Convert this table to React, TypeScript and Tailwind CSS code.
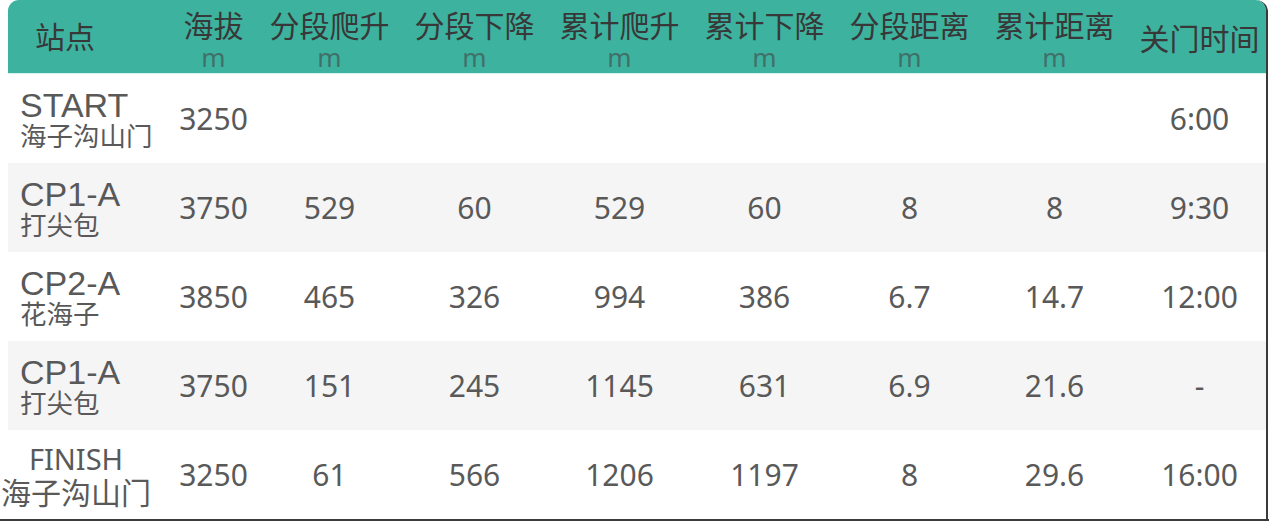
import React from "react"

interface Row {
    name: string
    sub: string
    big?: boolean
    cells: string[]
}

const headers: { label: string; unit?: string }[] = [
    { label: "海拔", unit: "m" },
    { label: "分段爬升", unit: "m" },
    { label: "分段下降", unit: "m" },
    { label: "累计爬升", unit: "m" },
    { label: "累计下降", unit: "m" },
    { label: "分段距离", unit: "m" },
    { label: "累计距离", unit: "m" },
    { label: "关门时间" },
]

const rows: Row[] = [
    { name: "START", sub: "海子沟山门", cells: ["3250", "", "", "", "", "", "", "6:00"] },
    { name: "CP1-A", sub: "打尖包", cells: ["3750", "529", "60", "529", "60", "8", "8", "9:30"] },
    { name: "CP2-A", sub: "花海子", cells: ["3850", "465", "326", "994", "386", "6.7", "14.7", "12:00"] },
    { name: "CP1-A", sub: "打尖包", cells: ["3750", "151", "245", "1145", "631", "6.9", "21.6", "-"] },
    { name: "FINISH", sub: "海子沟山门", big: true, cells: ["3250", "61", "566", "1206", "1197", "8", "29.6", "16:00"] },
]

const grid = "grid grid-cols-[162px_87px_repeat(6,145px)_1fr]"
const cjk = "font-['Noto_Sans','Noto_Sans_CJK_SC',sans-serif]"

export default function App() {
    return (
        <div className={`w-[1269px] h-[521px] bg-white border-b-2 border-[#3a3a3a] ${cjk}`}>
            <div className="ml-[8px] w-[1260px] h-[519px] border-r-2 border-[#3a3a3a] rounded-tr-[12px]">
                <div className={`${grid} h-[74px] bg-[#3db39f] rounded-t-[11px] border-b border-[#d6efea]`}>
                    <div className="flex items-center justify-center pr-[48px] text-[30px] text-[#383838]">站点</div>
                    {headers.map(h => (
                        <div key={h.label} className={`flex flex-col items-center justify-center ${h.unit ? "pt-[5px]" : "pl-[6px] pt-[4px]"}`}>
                            <span className="text-[30px] leading-[30px] text-[#383838] whitespace-nowrap">{h.label}</span>
                            {h.unit && <span className="mt-[5px] text-[26px] leading-[22px] text-[#41706a]">{h.unit}</span>}
                        </div>
                    ))}
                </div>
                {rows.map((r, i) => (
                    <div key={i} className={`${grid} h-[89px] ${i % 2 === 1 ? "bg-[#f5f5f5]" : "bg-white"} text-[#595959]`}>
                        {r.big ? (
                            <div className="ml-[-8px] w-[152px] flex flex-col items-center justify-center">
                                <span className="text-[29px] leading-[32px]">{r.name}</span>
                                <span className="text-[30px] leading-[32px] font-['Noto_Sans_CJK_SC',sans-serif]">{r.sub}</span>
                            </div>
                        ) : (
                            <div className="flex flex-col items-start justify-center pl-[12px] pt-[2px]">
                                <span className="text-[34px] leading-[30px] font-['Liberation_Sans',Arial,sans-serif]">{r.name}</span>
                                <span className="text-[26.5px] leading-[30px] font-['Noto_Sans_CJK_SC',sans-serif]">{r.sub}</span>
                            </div>
                        )}
                        {r.cells.map((c, j) => (
                            <div key={j} className={`flex items-center justify-center text-[30px] ${j === 7 ? "pl-[6px]" : ""}`}>
                                {c}
                            </div>
                        ))}
                    </div>
                ))}
            </div>
        </div>
    )
}
